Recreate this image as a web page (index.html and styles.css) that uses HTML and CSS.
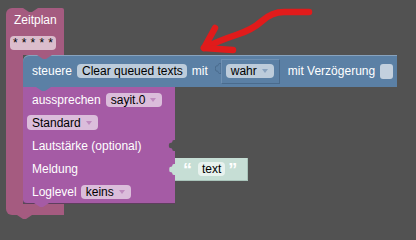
FILE: index.html
```html
<!DOCTYPE html>
<html lang="de">
<head>
<meta charset="utf-8">
<title>Zeitplan</title>
<link rel="stylesheet" href="styles.css">
</head>
<body>
<div class="ws">
  <div class="cblock">
    <div class="c-top">
      <div class="label">Zeitplan</div>
      <div class="field f-pink stars">* * * * *</div>
    </div>
    <div class="c-mid">
      <div class="c-arm"></div>
      <div class="stack">
        <div class="blk blue">
          <span class="label">steuere</span>
          <span class="field f-blue clear">Clear queued texts</span>
          <span class="label gap5">mit</span>
          <span class="value">
            <svg class="tab" width="6" height="11" viewBox="0 0 6 11"><path d="M6 0.5 L5 0.5 C2 0.5 5 3 1 3 C0 3 0.5 8 1 8 C5 8 2 10.5 5 10.5 L6 10.5 Z" fill="#5b80a5" stroke="#4a6b8d" stroke-width="1"/></svg>
            <span class="vbox"><span class="field f-blue">wahr<i class="dd dd-blue"></i></span></span>
          </span>
          <span class="label gap8">mit Verzögerung</span>
          <span class="check"></span>
        </div>
        <div class="blk purple">
          <div class="row">
            <span class="label">aussprechen</span>
            <span class="field f-purple gap5">sayit.0<i class="dd dd-purple"></i></span>
          </div>
          <div class="row">
            <span class="field f-purple std">Standard<i class="dd dd-purple"></i></span>
          </div>
          <div class="row">
            <span class="label">Lautstärke (optional)</span>
            <svg class="socket" width="7" height="11" viewBox="0 0 7 11"><path d="M7 0 L6 0 C3 0 6 3 2 3 C0.5 3 0.5 8 2 8 C6 8 3 11 6 11 L7 11 Z" fill="#525252"/></svg>
          </div>
          <div class="row">
            <span class="label">Meldung</span>
            <span class="textblk">
              <svg class="tab2" width="6" height="11" viewBox="0 0 6 11"><path d="M6 0 L5 0 C2 0 5 3 1 3 C0 3 0 8 1 8 C5 8 2 11 5 11 L6 11 Z" fill="#c6ded5"/></svg>
              <span class="tbody">
                <span class="quote">“</span>
                <span class="field f-mint">text</span>
                <span class="quote q2">”</span>
              </span>
            </span>
          </div>
          <div class="row">
            <span class="label">Loglevel</span>
            <span class="field f-purple gap4">keins<i class="dd dd-purple"></i></span>
          </div>
        </div>
      </div>
    </div>
    <div class="c-bot"></div>
  </div>
  <svg class="arrow" width="416" height="223" viewBox="0 0 416 223">
    <path d="M309 12 L284 12 Q272 12 262 21 Q252 30 236 35 Q218 41 204 48" fill="none" stroke="#e11b1b" stroke-width="6.5" stroke-linecap="round" stroke-linejoin="round"/>
    <path d="M215 28 L204 48 L233 50" fill="none" stroke="#e11b1b" stroke-width="6.5" stroke-linecap="round" stroke-linejoin="round"/>
  </svg>
</div>
</body>
</html>
```

FILE: styles.css
```css
html, body {
  margin: 0;
  padding: 0;
}
body {
  background: #525252;
  font-family: "Liberation Sans", Arial, sans-serif;
  font-size: 12px;
  width: 416px;
  height: 223px;
  overflow: hidden;
}
.ws {
  position: relative;
  width: 416px;
  height: 223px;
  box-sizing: border-box;
  padding: 8px 0 0 6px;
}
.cblock {
  display: flex;
  flex-direction: column;
  align-items: flex-start;
}
.label {
  color: #fff;
  line-height: 16px;
  white-space: nowrap;
}
.c-top {
  position: relative;
  width: 58px;
  height: 47px;
  box-sizing: border-box;
  background: #a55b80;
  border-radius: 6px 2px 0 0;
  padding: 4px 0 0 8px;
}
.c-top::before {
  content: "";
  position: absolute;
  top: 0;
  left: 17px;
  width: 15px;
  height: 4px;
  background: #525252;
  clip-path: polygon(0 0, 100% 0, 60% 100%, 40% 100%);
}
.c-mid {
  display: flex;
  position: relative;
  z-index: 2;
}
.c-arm {
  width: 17px;
  background: #a55b80;
}
.stack {
  display: flex;
  flex-direction: column;
  align-items: flex-start;
}
.c-bot {
  position: relative;
  z-index: 1;
  width: 58px;
  height: 11px;
  background: #a55b80;
  border-radius: 0 0 0 6px;
}
.c-bot::after {
  content: "";
  position: absolute;
  top: 100%;
  left: 11px;
  width: 15px;
  height: 4px;
  background: #a55b80;
  clip-path: polygon(0 0, 100% 0, 60% 100%, 40% 100%);
}
.field {
  display: inline-flex;
  align-items: center;
  height: 14px;
  box-sizing: border-box;
  padding: 0 6px 0 5px;
  border-radius: 4px;
  color: #000;
  white-space: nowrap;
  line-height: 14px;
}
.f-pink { background: #dbbdcc; }
.f-blue { background: #bdccdb; }
.f-purple { background: #dbbddb; }
.f-mint { background: #e8f2ee; padding: 0 4px; }
.stars {
  margin: 8px 0 0 -4px;
  width: 46px;
  padding-left: 3px;
  align-items: flex-start;
  letter-spacing: 0.4px;
}
.dd {
  display: inline-block;
  width: 0;
  height: 0;
  border-left: 3px solid transparent;
  border-right: 3px solid transparent;
  border-top: 4px solid;
  margin-left: 5px;
}
.dd-blue { border-top-color: #8aa3bf; }
.dd-purple { border-top-color: #bf8bbf; }
.blk {
  position: relative;
  box-sizing: border-box;
}
.blue {
  z-index: 2;
  display: flex;
  align-items: center;
  width: 374px;
  height: 32px;
  padding-left: 9px;
  background: #5b80a5;
  border-radius: 6px 0 0 0;
  box-shadow: inset 0 1px 0 rgba(255, 255, 255, 0.28);
}
.blue::before {
  content: "";
  position: absolute;
  top: 0;
  left: 14px;
  width: 15px;
  height: 4px;
  background: #a55b80;
  clip-path: polygon(0 0, 100% 0, 60% 100%, 40% 100%);
}
.blue::after {
  content: "";
  position: absolute;
  top: 100%;
  left: 13px;
  width: 15px;
  height: 4px;
  background: #5b80a5;
  clip-path: polygon(0 0, 100% 0, 60% 100%, 40% 100%);
}
.clear {
  margin-left: 5px;
  padding: 0 4px 0 5px;
}
.gap5 { margin-left: 5px; }
.gap4 { margin-left: 4px; }
.gap8 { margin-left: 8px; }
.value {
  display: flex;
  align-items: flex-start;
  margin-left: 7px;
}
.tab {
  margin-top: 4px;
  display: block;
}
.vbox {
  display: flex;
  align-items: center;
  width: 59px;
  height: 25px;
  box-sizing: border-box;
  border: 1px solid #4a6b8d;
  border-left-color: #6f90b2;
  border-top-color: #6f90b2;
  padding-left: 4px;
  background: #5b80a5;
}
.vbox .field {
  width: 48px;
}
.check {
  margin-left: 5px;
  width: 13px;
  height: 15px;
  border-radius: 3px;
  background: #c3d0de;
}
.purple {
  z-index: 1;
  width: 152px;
  padding: 1px 0 0 9px;
  background: #a55ba5;
  border-bottom: 1px solid #5e3f5e;
  border-radius: 0 0 0 4px;
}
.purple::after {
  content: "";
  position: absolute;
  top: 100%;
  left: 11px;
  width: 15px;
  height: 4px;
  background: #a55ba5;
  clip-path: polygon(0 0, 100% 0, 60% 100%, 40% 100%);
}
.row {
  display: flex;
  align-items: center;
  height: 23px;
}
.std {
  margin-left: -5px;
  height: 15px;
}
.socket {
  display: block;
  margin-left: auto;
}
.textblk {
  display: flex;
  align-items: flex-start;
  margin-left: auto;
  margin-right: -73px;
  margin-top: 1px;
}
.tab2 {
  display: block;
  margin-top: 6px;
}
.tbody {
  display: flex;
  align-items: center;
  width: 73px;
  height: 23px;
  box-sizing: border-box;
  padding-left: 8px;
  background: #c6ded5;
  box-shadow: inset -1px -1px 0 #a9c4ba;
}
.quote {
  color: #ffffff;
  font-weight: bold;
  font-size: 18px;
  line-height: 18px;
  width: 7px;
  margin-right: 8px;
  margin-top: 2px;
}
.q2 {
  margin: 2px 0 0 3px;
}
.arrow {
  position: absolute;
  top: 0;
  left: 0;
  pointer-events: none;
}
```
